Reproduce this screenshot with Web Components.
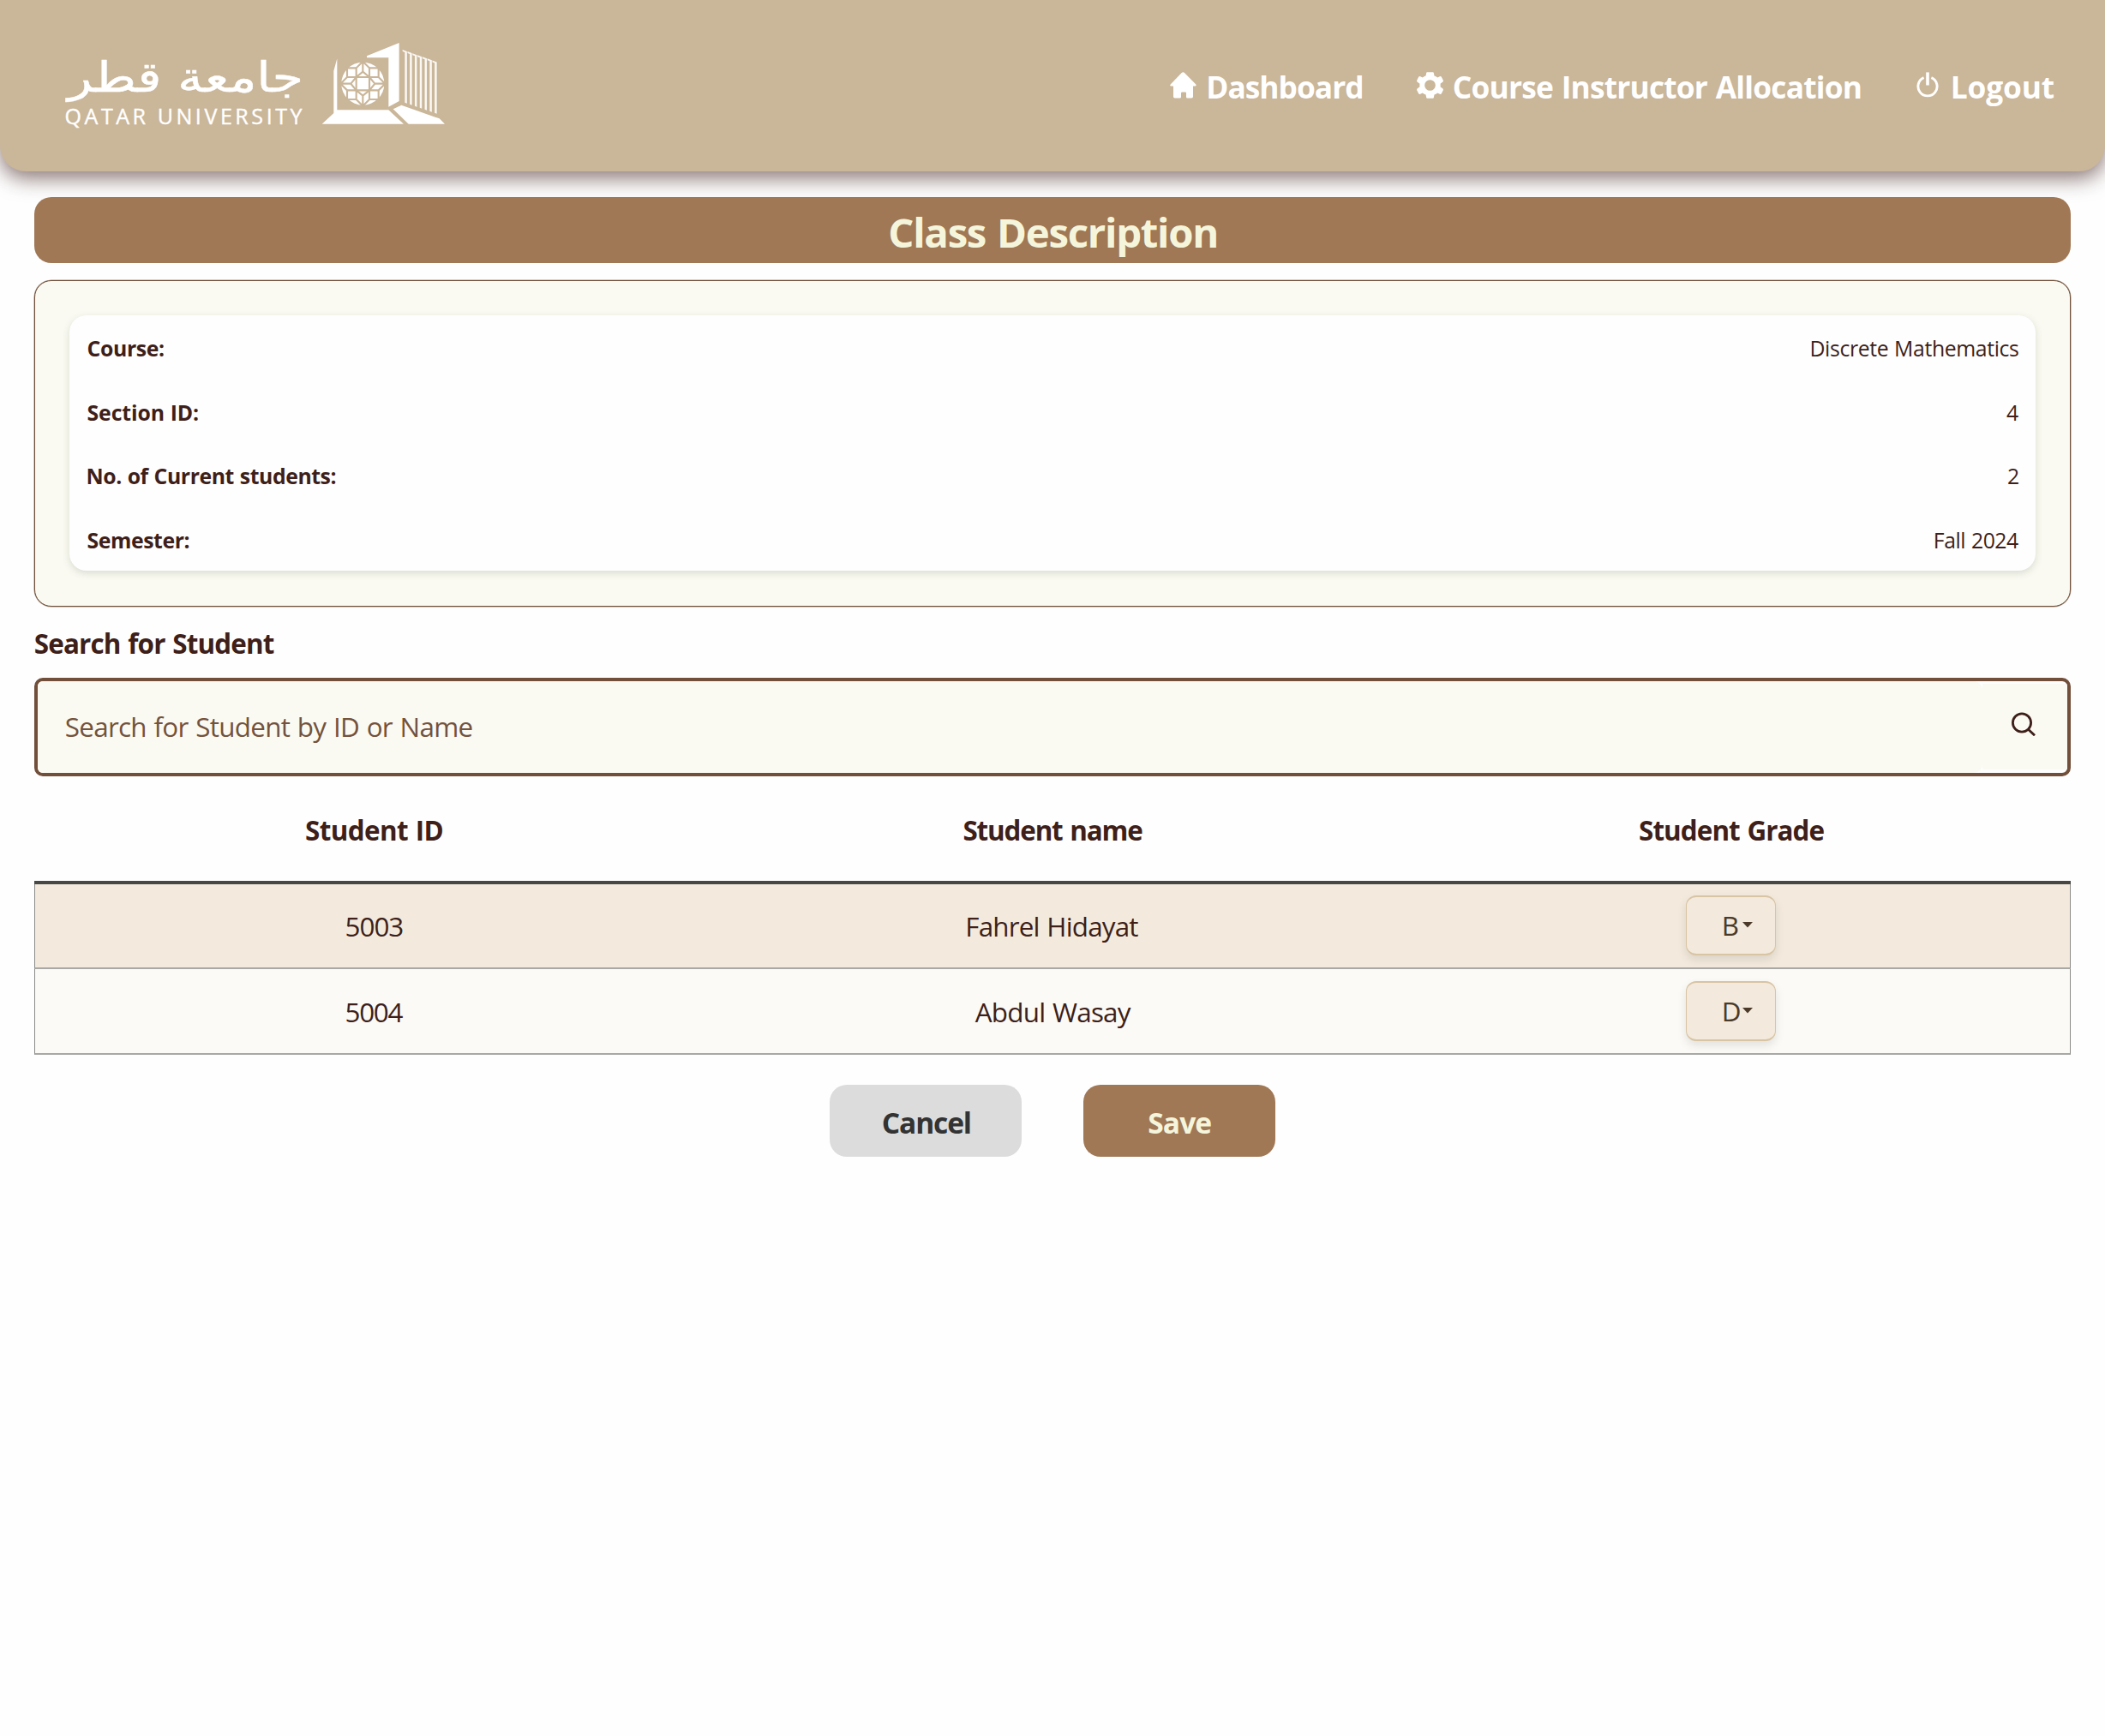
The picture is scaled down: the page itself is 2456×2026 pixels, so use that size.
<!DOCTYPE html>
<html lang="en">
<head>
<meta charset="utf-8">
<title>Class Description</title>
<style>
html,body{margin:0;padding:0;background:#fefefe}
body{font-family:"Open Sans","Noto Sans",sans-serif;color:#3e1f1a}
</style>
</head>
<body>
<grades-page></grades-page>
<script>
const FONT='"Open Sans","Noto Sans",sans-serif';
function define(name,css,html,setup){
  const t=document.createElement('template');
  t.innerHTML='<style>*{box-sizing:border-box}'+css+'</style>'+html;
  customElements.define(name,class extends HTMLElement{
    connectedCallback(){
      if(this.shadowRoot)return;
      this.attachShadow({mode:'open'}).append(t.content.cloneNode(true));
      if(setup)setup(this,this.shadowRoot);
    }
  });
}

/* A single line of text tracked to a given ink width: <fit-text s="size" w="width" b="weight"> */
const ctx=document.createElement('canvas').getContext('2d');
define('fit-text',':host{display:inline-block;white-space:nowrap;line-height:1.36}span{display:block}','<span><slot></slot></span>',(el,root)=>{
  const s=+el.getAttribute('s'),w=+el.getAttribute('w'),b=el.getAttribute('b')||400,txt=el.textContent,sp=root.querySelector('span');
  ctx.font=`${b} ${s}px ${FONT}`;
  const m=ctx.measureText(txt),ink=m.actualBoundingBoxLeft+m.actualBoundingBoxRight;
  const gaps=txt.split(' ').length-1,extra=s*.015;
  const ls=txt.length>1&&w?(w-ink-gaps*extra)/(txt.length-1-gaps):0;
  sp.style.cssText=`font-size:${s}px;font-weight:${b};letter-spacing:${ls}px;word-spacing:${extra-ls}px;margin-left:${m.actualBoundingBoxLeft+.8}px;margin-right:${m.actualBoundingBoxRight-m.width-ls-.8}px`;
});

define('qu-logo',':host{display:flex;align-items:flex-start;color:#fff}svg{display:block;fill:#fff}',`
<svg width="300" height="120" viewBox="0 0 300 120">
  <text x="294" y="67.4" direction="rtl" font-family="DejaVu Sans" font-size="49" textLength="275" lengthAdjust="spacingAndGlyphs" stroke="#fff" stroke-width=".5">جامعة قطر</text>
  <text x="15.500" y="104.6" font-family="Open Sans" font-size="25" font-weight="500" textLength="277" lengthAdjust="spacing" stroke="#fff" stroke-width=".4">QATAR UNIVERSITY</text>
</svg>
<svg width="180" height="120" viewBox="0 0 540 360">
  <path d="M88 128 100 85V265H280L333 314H47L88 276Z"/>
  <path d="M204 76 317 30V234L280 254V82H204Z"/>
  <path d="M325 248 458 295 477 314H350L296 262Z"/>
  <g id="bars"></g>
  <circle cx="190" cy="173" r="75"/>
  <g transform="translate(190 173)" fill="none" stroke="#cab699" stroke-width="6.4">
    <path d="M-23-23H23V23H-23Z"/>
    <g><path d="M-23-23V-55L0-78L23-55V-23M-23-23L0-42L23-23M0-42V-78M-23-55H-55V-23"/></g>
    <g transform="rotate(90)"><path d="M-23-23V-55L0-78L23-55V-23M-23-23L0-42L23-23M0-42V-78M-23-55H-55V-23"/></g>
    <g transform="rotate(180)"><path d="M-23-23V-55L0-78L23-55V-23M-23-23L0-42L23-23M0-42V-78M-23-55H-55V-23"/></g>
    <g transform="rotate(270)"><path d="M-23-23V-55L0-78L23-55V-23M-23-23L0-42L23-23M0-42V-78M-23-55H-55V-23"/></g>
  </g>
</svg>`,(el,root)=>{
  let d='';
  for(let i=0;i<7;i++){const x=337+i*17.4,t=60+i*6.2,b=240+i*6;d+=`M${x-8} ${t-6}L${x+7.5} ${t}V${b+2}L${x} ${b-1}V${t+3}L${x-8} ${t}Z`;}
  root.getElementById('bars').innerHTML=`<path d="${d}" opacity=".9"/>`;
});

const ICONS={
 home:`<svg width="31" height="31" viewBox="31 26.500 93 93"><path d="M72 29.500Q77 25 82 29.500L122 70Q125 76 119 76H112V113Q112 118 107 118H92Q88 118 88 114V101Q88 97 85 97H74Q70 97 70 101V114Q70 118 66 118H48Q43 118 43 113V76H36Q29 76 33 70Z"/></svg>`,
 gear:`<svg width="31" height="31" viewBox="-46.500 -46.500 93 93"><path fill-rule="evenodd" d="M-10-46H10Q13-46 13-43L15-33Q21-31 26-27L34-31Q38-32 40-29L46-17Q47-13 44-11L36-5Q37 0 36 5L44 11Q47 13 46 17L40 29Q38 32 34 31L26 27Q21 31 15 33L13 43Q13 46 10 46H-10Q-13 46-13 43L-15 33Q-21 31-26 27L-34 31Q-38 32-40 29L-46 17Q-47 13-44 11L-36 5Q-37 0-36-5L-44-11Q-47-13-46-17L-40-29Q-38-32-34-31L-26-27Q-21-31-15-33L-13-43Q-13-46-10-46ZM0-19A19 19 0 1 0 0 19A19 19 0 1 0 0-19Z"/></svg>`,
 power:`<svg width="26" height="30" viewBox="0 0 26 30"><path d="M11.200 .4h3.600V15.500h-3.600Z"/><path d="M8.600 6.600A11.100 11.100 0 1 0 17.400 6.600" fill="none" stroke="#fff" stroke-width="2.900"/></svg>`
};
define('nav-item',':host{display:flex;align-items:flex-start;height:50px}i{display:block;flex:none;margin-top:7px}svg{display:block;fill:#fff}','<i></i><slot></slot>',(el,root)=>{
  const i=root.querySelector('i');i.innerHTML=ICONS[el.getAttribute('icon')];i.style.marginRight=el.getAttribute('gap')+'px';
});
define('top-bar',`:host{display:flex;justify-content:space-between;height:200px;padding:40px 60px 0;background:#cab699;border-radius:0 0 30px 30px;box-shadow:0 8px 24px rgba(60,28,25,.6);color:#fff}
nav{display:flex;padding-top:36.500px}`,`
<qu-logo></qu-logo>
<nav>
<nav-item icon="home" gap="13.500"><fit-text s="35.300" w="179" b="700">Dashboard</fit-text></nav-item>
<nav-item icon="gear" gap="12" style="margin-left:64.500px"><fit-text s="35.300" w="474" b="700">Course Instructor Allocation</fit-text></nav-item>
<nav-item icon="power" gap="16" style="margin-left:66px"><fit-text s="35.300" w="118" b="700">Logout</fit-text></nav-item>
</nav>`);

define('title-bar',':host{display:flex;justify-content:center;align-items:center;height:76.300px;padding-top:4.500px;border-radius:20px;background:#a07855;color:#f5f5dc}','<slot></slot>');
define('info-row',':host{display:flex;justify-content:space-between;align-items:center;height:74.700px;padding:4px 20.700px 0}','<slot></slot>');
define('info-card',`:host{display:block;height:381.300px;margin-top:20px;padding:40px;background:#fafaf2;border:1px solid #6f4e37;box-shadow:0 0 0 .5px rgba(111,78,55,.6);border-radius:20px}
div{border-radius:20px;background:#fefefe;box-shadow:0 3px 9px rgba(60,70,50,.17)}`,`<div>
<info-row><fit-text s="24.800" w="88.600" b="700">Course:</fit-text><fit-text s="24.800" w="241.600">Discrete Mathematics</fit-text></info-row>
<info-row><fit-text s="24.800" w="128.600" b="700">Section ID:</fit-text><fit-text s="24.800">4</fit-text></info-row>
<info-row><fit-text s="24.800" w="289" b="700">No. of Current students:</fit-text><fit-text s="24.800">2</fit-text></info-row>
<info-row><fit-text s="24.800" w="118" b="700">Semester:</fit-text><fit-text s="24.800" w="97.300">Fall 2024</fit-text></info-row>
</div>`);

define('search-box',`:host{display:flex;height:115.400px;border:4px solid #714f3a;border-radius:10px;background:#fefefe;color:#74523c;overflow:hidden}
.in{flex:1;display:flex;align-items:center;padding:1px 0 0 32px;background:#fafaf2;border-radius:0 10px 10px 0}
.go{width:99px;margin:3px 0 4px;background:#fafaf3;display:flex;justify-content:center;align-items:center;padding:0 4px 6px 0}
svg{display:block;fill:none;stroke:#3e1f1a;stroke-width:2.800}`,`
<div class="in"><fit-text s="31.400" w="473.700">Search for Student by ID or Name</fit-text></div>
<div class="go"><svg width="28" height="28" viewBox="0 0 28 28"><circle cx="12" cy="12.500" r="10.600"/><path d="M19.500 20.300 27 27.300"/></svg></div>`);

define('grade-select',`:host{display:flex;width:105px;height:70px;border:1.500px solid #d9c4a4;border-top-width:2px;border-bottom-width:2px;border-radius:12px;background:#f3eadd;color:#4b3a2a;box-shadow:0 5px 11px rgba(0,0,0,.1);align-items:center;padding:1px 0 0 43px}
b{display:block;width:22px}
svg{display:block;margin-top:-2px}`,`<b><slot></slot></b><svg width="12" height="7" viewBox="0 0 12 7"><path d="M0 0H12L6 6.500Z" fill="#4b3a2a"/></svg>`);

define('student-row',`:host{display:grid;grid-template-columns:1fr 1fr 1fr;height:100px;align-items:center;justify-items:center;border:solid #a8a8a6;border-width:0 1.250px 2px;border-left-color:#8b8b88;border-right-color:#8b8b88}
::slotted(fit-text){margin-top:1.500px}::slotted(grade-select){margin-top:-1px}`,`<slot></slot>`);
define('student-table',`:host{display:block}
.h{display:grid;grid-template-columns:1fr 1fr 1fr;height:126.300px;align-items:center;justify-items:center;border-bottom:4px solid #474744;padding-top:4px}`,`
<div class="h"><fit-text s="31.400" w="159.500" b="700">Student ID</fit-text><fit-text s="31.400" w="208.700" b="700">Student name</fit-text><fit-text s="31.400" w="215.500" b="700">Student Grade</fit-text></div>
<student-row style="background:#f3eadd;height:99px"><fit-text s="31.400" w="65.700">5003</fit-text><fit-text s="31.400" w="199">Fahrel Hidayat</fit-text><grade-select><fit-text s="31.400">B</fit-text></grade-select></student-row>
<student-row style="background:#fbfaf6"><fit-text s="31.400" w="66">5004</fit-text><fit-text s="31.400" w="182">Abdul Wasay</fit-text><grade-select><fit-text s="31.400">D</fit-text></grade-select></student-row>`);

define('action-button',`:host{display:flex;justify-content:center;align-items:center;width:224px;height:83.300px;padding-top:5px;border-radius:20px;background:#dcdcdc;color:#333}
:host([primary]){background:#a07855;color:#f5f5dc}`,'<slot></slot>');

define('grades-page',`:host{display:block}
main{display:block;padding:30.300px 40px 0}
.lbl{height:82.700px;padding-top:22px}
.btns{display:flex;justify-content:center;gap:72px;margin-top:35.200px}`,`
<top-bar></top-bar>
<main>
<title-bar><fit-text s="47.300" w="381" b="700">Class Description</fit-text></title-bar>
<info-card></info-card>
<div class="lbl"><fit-text s="31.400" w="279" b="700">Search for Student</fit-text></div>
<search-box></search-box>
<student-table></student-table>
<div class="btns"><action-button><fit-text s="33.600" w="102" b="700">Cancel</fit-text></action-button><action-button primary><fit-text s="33.600" w="73" b="700">Save</fit-text></action-button></div>
</main>`);
</script>
</body>
</html>
